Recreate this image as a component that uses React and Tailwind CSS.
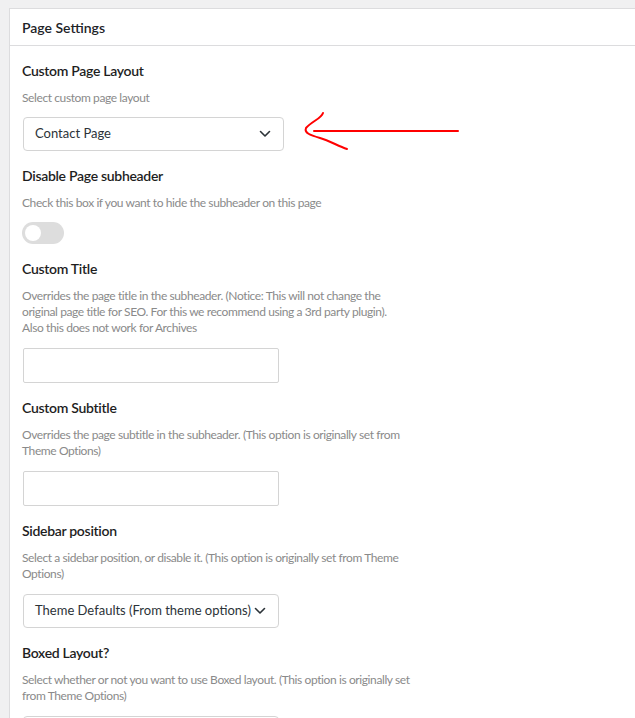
import React from "react";

function Chevron() {
  return (
    <svg width="12" height="8" viewBox="0 0 12 8" fill="none" className="shrink-0">
      <path d="M1.5 1.5 L6 6 L10.5 1.5" stroke="#2c3338" strokeWidth="1.6" strokeLinecap="round" strokeLinejoin="round" />
    </svg>
  );
}

function Field({ label, desc, children, ctrl = "mt-[11px]", mb = "mb-[15px]" }) {
  return (
    <div className={mb}>
      <div className="h-5 leading-5 text-[14px] font-semibold tracking-[-0.3px] text-[#1e1e1e]">{label}</div>
      <div className="mt-[9px] text-[12px] leading-4 tracking-[-0.4px] text-[#8a8a8a]">
        {desc.map((line, i) => (
          <div key={i}>{line}</div>
        ))}
      </div>
      <div className={ctrl}>{children}</div>
    </div>
  );
}

function Select({ value, width }) {
  return (
    <div
      className={`${width} h-[34px] ml-px flex items-center justify-between pl-[11px] pr-[12px] border border-[#d4d4d4] rounded-[4px] bg-white text-[13px] text-[#2c3338] whitespace-nowrap`}
    >
      <span>{value}</span>
      <Chevron />
    </div>
  );
}

function Input() {
  return <div className="w-[256px] h-[35px] ml-px border border-[#d4d4d4] rounded-[2px] bg-white" />;
}

export default function App() {
  return (
    <div className="min-h-[718px] bg-[#f0f0f1] pt-2 pl-[9px] overflow-hidden font-['Lato',sans-serif]">
      <div className="relative bg-white border-t border-l border-[#dcdcde] min-h-[720px]">
        <div className="h-[37px] border-b border-[#dcdcde] flex items-center px-3 text-[14px] font-semibold text-[#1d2327]">
          Page Settings
        </div>
        <div className="px-3 pt-[15px]">
          <Field label="Custom Page Layout" desc={["Select custom page layout"]}>
            <Select value="Contact Page" width="w-[261px]" />
          </Field>
          <Field label="Disable Page subheader" desc={["Check this box if you want to hide the subheader on this page"]}>
            <div className="w-[42px] h-[22px] rounded-full bg-[#dddddd] flex items-center pl-[3px]">
              <div className="w-4 h-4 rounded-full bg-white" />
            </div>
          </Field>
          <Field
            label="Custom Title"
            ctrl="mt-[12px]"
            desc={[
              "Overrides the page title in the subheader. (Notice: This will not change the",
              "original page title for SEO. For this we recommend using a 3rd party plugin).",
              "Also this does not work for Archives",
            ]}
          >
            <Input />
          </Field>
          <Field
            label="Custom Subtitle"
            ctrl="mt-[12px]"
            desc={["Overrides the page subtitle in the subheader. (This option is originally set from", "Theme Options)"]}
          >
            <Input />
          </Field>
          <Field
            label="Sidebar position"
            ctrl="mt-[12px]"
            desc={["Select a sidebar position, or disable it. (This option is originally set from Theme", "Options)"]}
          >
            <Select value="Theme Defaults (From theme options)" width="w-[256px]" />
          </Field>
          <Field
            label="Boxed Layout?"
            ctrl="mt-[12px]"
            desc={["Select whether or not you want to use Boxed layout. (This option is originally set", "from Theme Options)"]}
          >
            <Select value="" width="w-[256px]" />
          </Field>
        </div>
        <svg
          className="absolute left-[291px] top-[94px] pointer-events-none"
          width="160"
          height="50"
          viewBox="291 94 160 50"
          fill="none"
        >
          <path d="M304 122 L448 122" stroke="#ff0000" strokeWidth="2" strokeLinecap="round" />
          <path
            d="M313 104 C311 110 302 112 296 119 C294 124 300 126 310 129 C320 132 328 137 337 140"
            stroke="#ff0000"
            strokeWidth="2"
            strokeLinecap="round"
            fill="none"
          />
        </svg>
      </div>
    </div>
  );
}
